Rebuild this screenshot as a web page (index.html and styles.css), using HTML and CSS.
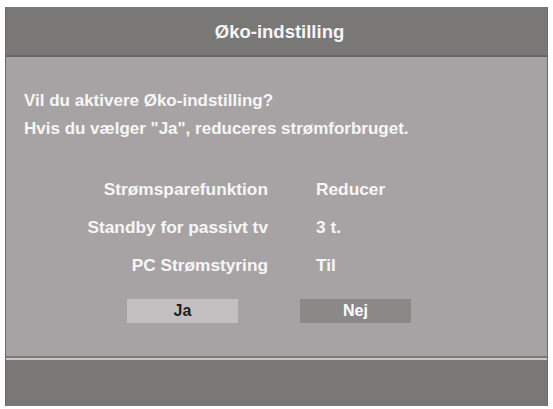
FILE: index.html
```html
<!DOCTYPE html>
<html lang="da">
<head>
  <meta charset="UTF-8" />
  <meta name="viewport" content="width=device-width, initial-scale=1.0" />
  <title>Øko-indstilling</title>
  <link rel="stylesheet" href="styles.css">
</head>
<body>
  <div class="dialog">
    <!-- Titellinje -->
    <div class="dialog-title">Øko-indstilling</div>
    <div class="dialog-body">
      <p class="question">Vil du aktivere Øko-indstilling?</p>
      <p class="question">Hvis du vælger "Ja", reduceres strømforbruget.</p>
      <!-- Indstillinger der ændres -->
      <div class="settings">
        <span class="label">Strømsparefunktion</span><span class="value">Reducer</span>
        <span class="label">Standby for passivt tv</span><span class="value">3 t.</span>
        <span class="label">PC Strømstyring</span><span class="value">Til</span>
      </div>
      <div class="buttons">
        <button class="btn active">Ja</button>
        <button class="btn">Nej</button>
      </div>
    </div>
    <div class="dialog-footer"></div>
  </div>
</body>
</html>
```

FILE: styles.css
```css
:root {
  --bar-color: #7a7777;
  --body-color: #a7a3a4;
  --text-color: #f6f6f6;
}
* { box-sizing: border-box; }
body {
  margin: 0;
  background: #fff;
  font-family: 'Liberation Sans', Arial, sans-serif;
  font-weight: 700;
  color: var(--text-color);
}
.dialog {
  margin: 7px 5px 0;
  width: 543px;
  border-left: 1px solid #6c6969;
  border-right: 1px solid #6c6969;
}
.dialog-title {
  height: 50px;
  background: var(--bar-color);
  border-bottom: 2px solid #676464;
  display: flex;
  justify-content: center;
  align-items: center;
  font-size: 18.5px;
  padding: 2px 0 0 6px;
}
.dialog-body {
  height: 301px;
  background: var(--body-color);
  border-bottom: 2px solid #7c7979;
  padding: 30px 0 0 18px;
}
.question {
  margin: 0;
  font-size: 17px;
  line-height: 28px;
}
.settings {
  display: grid;
  grid-template-columns: 244px auto;
  column-gap: 48px;
  grid-auto-rows: 38px;
  align-items: center;
  margin-top: 27px;
  margin-left: -18px;
  padding-left: 18px;
  font-size: 17.3px;
}
.settings .label { text-align: right; }
.buttons {
  display: flex;
  gap: 62px;
  margin-top: 15px;
  padding-left: 103px;
}
.btn {
  width: 111px;
  height: 24px;
  border: none;
  padding: 0;
  font-family: inherit;
  font-weight: 700;
  font-size: 16px;
  color: #fff;
  background: #8b8888;
}
.btn.active {
  background: #c1bfbf;
  color: #1e1e1e;
}
.dialog-footer {
  height: 48px;
  background: var(--bar-color);
  border-top: 2px solid #cac7c7;
}
```
